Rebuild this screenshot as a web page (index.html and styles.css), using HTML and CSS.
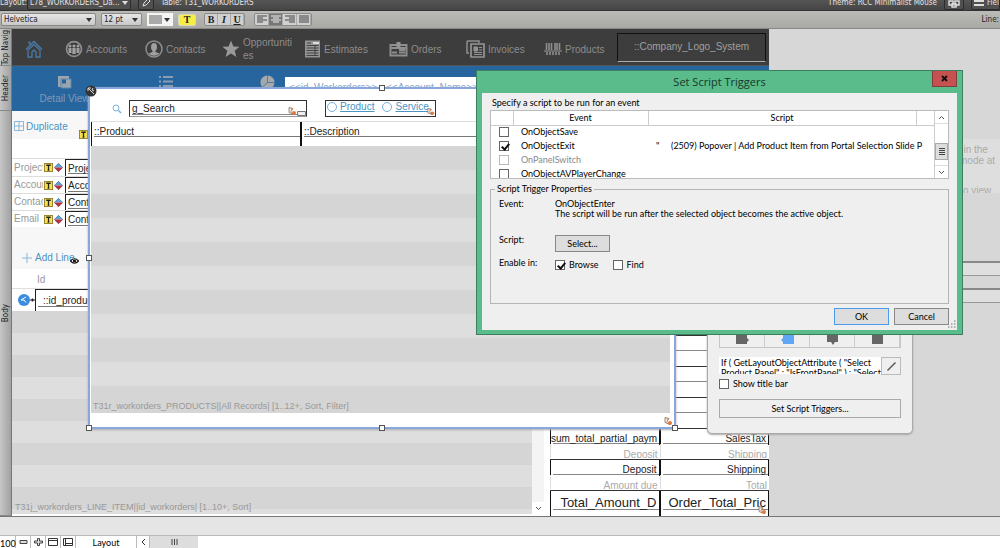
FILE: index.html
```
<!DOCTYPE html>
<html lang="en">
<head>
<meta charset="UTF-8">
<meta name="viewport" content="width=device-width, initial-scale=1.0">
<title>Workorders - Layout</title>
<link rel="stylesheet" href="styles.css">
</head>
<body>

<svg class="defs" aria-hidden="true">
<symbol id="tip" viewBox="0 0 10 10"><rect x=".5" y=".5" width="9" height="9" fill="#f7e04a" stroke="#8f7c2a"/><path d="M2.5 2.5h5M5 2.5v5.5M4 8h2" stroke="#222" stroke-width="1.4" fill="none"/></symbol>
<symbol id="diamond" viewBox="0 0 10 10"><path d="M5 0l5 5H0z" fill="#58a4d8"/><path d="M0 5h10L5 10z" fill="#c0303a"/><path d="M5 .5L9.500 5 5 9.500.5 5z" fill="none" stroke="#4a5578" stroke-width=".5"/></symbol>
<symbol id="trigger" viewBox="0 0 10 10"><path d="M2 1.5l4 1-2 3 3 3-5-2z" fill="#eee" stroke="#8a6a55" stroke-width=".8"/><circle cx="7" cy="7" r="2" fill="#e07a3c"/><circle cx="5" cy="3" r="1" fill="#d98a5a"/></symbol>
<symbol id="eye" viewBox="0 0 10 8"><path d="M.5 4Q5-1 9.500 4Q5 9 .5 4z" fill="#fff" stroke="#111" stroke-width="1.300"/><circle cx="5" cy="4" r="1.800" fill="#111"/></symbol>
</svg>

<!-- Layout bar -->
<div class="topbar">
<span>Layout:</span>
<button class="dark-btn layout-name">L78_WORKORDERS_Da...<i class="caret light"></i></button>
<button class="dark-btn pencil" aria-label="Edit layout"><svg width="10" height="10" viewBox="0 0 10 10"><path d="M2 8l1-3 4-4 2 2-4 4z" fill="none" stroke="#ddd"/></svg></button>
<span>Table: T31_WORKORDERS</span>
<span class="theme">Theme: RCC Minimalist Mouse</span>
<button class="dark-btn" aria-label="Change theme"><svg width="14" height="10" viewBox="0 0 14 10"><path d="M2 3h4v4H2zM8 3h4v4H8zM5 6h4v3H5z" fill="none" stroke="#ddd" stroke-width="1.500"/></svg></button>
<button class="dark-btn fields"><svg width="10" height="8" viewBox="0 0 10 8"><path d="M0 2h10M0 6h10" stroke="#ddd" stroke-width="2"/></svg> Field</button>
</div>

<!-- Formatting bar -->
<div class="toolbar">
<button class="tool-select font">Helvetica<i class="caret"></i></button>
<button class="tool-select size">12 pt<i class="caret"></i></button>
<button class="swatch" aria-label="Text color"><b></b><i class="caret"></i></button>
<button class="highlight">T</button>
<div class="group style"><button>B</button><button class="ital">I</button><button class="under">U</button></div>
<div class="group align">
<button aria-label="Left"><svg width="10" height="9" viewBox="0 0 10 9"><path d="M0 1h10M0 3h6M0 5h10M0 7h6" stroke="#444"/></svg></button>
<button class="on" aria-label="Center"><svg width="10" height="9" viewBox="0 0 10 9"><path d="M0 1h10M2 3h6M0 5h10M2 7h6" stroke="#eee"/></svg></button>
<button aria-label="Right"><svg width="10" height="9" viewBox="0 0 10 9"><path d="M0 1h10M4 3h6M0 5h10M4 7h6" stroke="#444"/></svg></button>
<button aria-label="Justify"><svg width="10" height="9" viewBox="0 0 10 9"><path d="M0 1h10M0 3h10M0 5h10M0 7h10" stroke="#444"/></svg></button>
</div>
<span class="line-label">Line:</span>
</div>

<div class="workspace">
<div class="parts">
<div class="part nav-part"><span>Top Navig</span></div>
<div class="part header-part"><span>Header</span></div>
<div class="part body-part"><span>Body</span></div>
</div>

<div class="canvas">
<nav class="nav">
<a href="#" aria-label="Home"><svg width="18" height="18" viewBox="0 0 18 18"><path d="M1 9.500L9 1.500l8 8M3 2.500h2v3M3 10v7h4v-5l2-2 2 2v5h4v-7L9 4.500z" fill="none" stroke="#477ba6" stroke-width="1.300"/></svg></a>
<a href="#"><svg width="18" height="18" viewBox="0 0 18 18"><circle cx="9" cy="9" r="8.300" fill="#8e8e8e"/><circle cx="9" cy="9" r="6.600" fill="#3d3d3d"/><g fill="#a0a0a0"><circle cx="5" cy="6" r="1.500"/><circle cx="9" cy="6" r="1.600"/><circle cx="13" cy="6" r="1.500"/><path d="M3.500 8h3v5h-3zM7.300 8h3.400v6H7.300zM11.500 8h3v5h-3z"/></g></svg><span>Accounts</span></a>
<a href="#"><svg width="18" height="18" viewBox="0 0 18 18"><circle cx="9" cy="9" r="8" fill="none" stroke="#8e8e8e" stroke-width="1.500"/><ellipse cx="9" cy="7" rx="3" ry="4" fill="#a0a0a0"/><path d="M7.500 10h3v2l4 1.500Q9 18 3.500 13.500l4-1.500z" fill="#a0a0a0"/></svg><span>Contacts</span></a>
<a href="#"><svg width="18" height="18" viewBox="0 0 18 18"><path d="M9 .5l2.400 6 6.100.3-4.800 4 1.700 6.200L9 13.500 3.600 17l1.700-6.200-4.800-4 6.100-.3z" fill="#9a9a9a"/></svg><span>Opportuniti<br>es</span></a>
<a href="#"><svg width="17" height="18" viewBox="0 0 17 18"><rect x="1" y=".5" width="15" height="17" fill="#949494"/><path d="M3 3h4M2.500 5.500h12M2.500 8h12M2.500 10.500h12M2.500 13h12M2.500 15.500h12M11 6v10" stroke="#3d3d3d" stroke-width=".9"/><path d="M9 2h6v2H9z" fill="#ddd"/></svg><span>Estimates</span></a>
<a href="#"><svg width="19" height="18" viewBox="0 0 19 18"><path d="M1.500 5h16v10.500h-16zM1.500 8h16M3 12.500h5M10 10h6M10 12.500h6" fill="none" stroke="#8e8e8e" stroke-width="2"/><path d="M7.500 2h4v6h-4z" fill="#949494"/></svg><span>Orders</span></a>
<a href="#"><svg width="19" height="18" viewBox="0 0 19 18"><path d="M1 1h12v2M1 1v12h2" fill="none" stroke="#8e8e8e" stroke-width="1.500"/><path d="M5 4h13v13H5z" fill="none" stroke="#949494" stroke-width="1.700"/><path d="M8 7h3.500v4H8zM13 7.500h3M13 10h3M8 12.500h8M8 14.500h8" fill="#949494" stroke="#949494"/></svg><span>Invoices</span></a>
<a href="#"><svg width="18" height="18" viewBox="0 0 18 18"><path d="M2.500 3v7M5 3v7M7.500 3v7M11 3v7M13 3v7M15.500 3v7M3 12v3M6 12v3M9 12v3M12 12v3M15 12v3" stroke="#8e8e8e" stroke-width="1.600"/><path d="M0 11h18" stroke="#999"/></svg><span>Products</span></a>
<div class="logo">::Company_Logo_System</div>
</nav>

<header class="header">
<a href="#" class="detail"><svg width="15" height="14" viewBox="0 0 15 14"><path d="M1 1h11v11H1z" fill="#9aa5ae"/><path d="M4 4h10v9H4z" fill="#9aa5ae" stroke="#5c88ad"/><path d="M5 4.500h4v4H5z" fill="#27659f"/></svg><span>Detail View</span></a>
<a href="#" aria-label="List View"><svg width="14" height="14" viewBox="0 0 14 14"><path d="M0 2h2M0 6.500h2M0 11h2M4 2h10M4 6.500h10M4 11h10" stroke="#8b9daf" stroke-width="1.800"/></svg></a>
<a href="#" aria-label="Report"><svg width="15" height="15" viewBox="0 0 15 15"><circle cx="7.500" cy="7.500" r="7" fill="#a3a9ad"/><path d="M7.500 0v7.500L2.500 12M7.500 7.500H15" fill="none" stroke="#47708f" stroke-width=".8"/></svg></a>
<div class="title-field">&lt;&lt;id_Workorders&gt;&gt; - &lt;&lt;Account_Name&gt;&gt; /</div>
</header>

<div class="record">
<div class="left-col">
<div class="duplicate"><a href="#"><svg width="10" height="10" viewBox="0 0 10 10"><path d="M.5.5h9v9h-9zM5 0v10M0 5h10" fill="none" stroke="#7fb0d4" stroke-width=".9"/></svg>Duplicate</a><svg class="tip-end" width="9" height="9"><use href="#tip"/></svg></div>
<div class="details">
<div class="row"><label for="f1">Project</label><svg width="9" height="9"><use href="#tip"/></svg><svg width="9" height="9"><use href="#diamond"/></svg><input id="f1" value="Project_Name"></div>
<div class="row"><label for="f2">Account</label><svg width="9" height="9"><use href="#tip"/></svg><svg width="9" height="9"><use href="#diamond"/></svg><input id="f2" value="Account_Name"></div>
<div class="row"><label for="f3">Contact</label><svg width="9" height="9"><use href="#tip"/></svg><svg width="9" height="9"><use href="#diamond"/></svg><input id="f3" value="Contact_Name"></div>
<div class="row"><label for="f4">Email</label><svg width="9" height="9"><use href="#tip"/></svg><svg width="9" height="9"><use href="#diamond"/></svg><input id="f4" value="Contact_Email"></div>
</div>
<div class="add-line"><a href="#"><svg width="10" height="10" viewBox="0 0 10 10"><path d="M5 0v10M0 5h10" stroke="#8ab6d8"/></svg>Add Line</a><svg class="eye" width="9" height="8"><use href="#eye"/></svg></div>
<div class="id-head">Id</div>
<div class="line-item"><svg width="12" height="12" viewBox="0 0 12 12"><circle cx="6" cy="6" r="6" fill="#3c8ce0"/><path d="M3 6l5-3M3 6h3l2 2.500" stroke="#fff" fill="none"/></svg><svg width="5" height="6"><use href="#eye"/></svg><input aria-label="Product id" value="::id_product"></div>
<div class="stripes"><span>T31j_workorders_LINE_ITEM||id_workorders| [1..10+, Sort]</span></div>
</div>
<div class="line-scroll"><button aria-label="Scroll down"><svg width="7" height="5" viewBox="0 0 7 5"><path d="M1 1l2.500 2.500L6 1" fill="none" stroke="#555"/></svg></button></div>

<div class="totals">
<div class="pair"><b></b><b>Subtotal:</b></div>
<div class="pair small"><i></i><i></i></div>
<div class="pair"><b></b><b></b></div>
<div class="pair small"><i></i><i></i></div>
<div class="pair"><b></b><b></b></div>
<div class="pair small"><i></i><i></i></div>
<div class="pair"><b>sum_total_partial_paym</b><b>SalesTax</b></div>
<div class="pair small"><i>Deposit</i><i>Shipping</i></div>
<div class="pair"><b>Deposit</b><b>Shipping</b></div>
<div class="pair small"><i>Amount due</i><i>Total</i></div>
<div class="pair big"><b>Total_Amount_D</b><b>Order_Total_Pric</b><svg class="trig" width="10" height="10"><use href="#trigger"/></svg></div>
</div>
</div>
</div>

<div class="outside">
<div class="ghost note">Click in the<br>mode at</div>
<div class="ghost tail">how to view</div>
<div class="ghost-bar first"></div>
<div class="ghost-bar"></div>
</div>
</div>

<div class="gutter"></div>
<footer class="status">
<span class="zoom">100</span>
<button aria-label="Zoom out"><svg width="9" height="8" viewBox="0 0 9 8"><path d="M1 2.500h7v3H1z" fill="#ddd" stroke="#444"/></svg></button>
<button aria-label="Zoom in"><svg width="9" height="8" viewBox="0 0 9 8"><path d="M3.500.5h2v2.500h3v2h-3v2.500h-2V5h-3V3h3z" fill="#ddd" stroke="#444"/></svg></button>
<button aria-label="Status toolbar"><svg width="10" height="8" viewBox="0 0 10 8"><path d="M.5.5h9v7h-9zM.5 2.500h9" fill="none" stroke="#333"/></svg></button>
<button aria-label="Part labels"><svg width="10" height="8" viewBox="0 0 10 8"><path d="M.5.5h9v7h-9zM2.500.5v7M2.500 5.500h7" fill="none" stroke="#333"/></svg></button>
<button class="mode">Layout</button>
<button class="arrow" aria-label="Scroll left"><svg width="5" height="8" viewBox="0 0 5 8"><path d="M4 1L1 4l3 3" fill="none" stroke="#333"/></svg></button>
<div class="thumb"><svg width="7" height="6" viewBox="0 0 7 6"><path d="M1 0v6M3.500 0v6M6 0v6" stroke="#444"/></svg></div>
</footer>

<!-- Popover placed on the layout -->
<section class="popover">
<span class="handle n"></span><span class="handle w"></span><span class="handle sw"></span><span class="handle s"></span><span class="handle se"></span>
<svg class="anchor" width="12" height="12" viewBox="0 0 12 12"><circle cx="6" cy="6" r="5.500" fill="#333"/><path d="M3 3l6 6M3 6V3h3M8 3l-1 2 2 1" stroke="#ddd" fill="none"/></svg>
<div class="filters">
<svg width="10" height="10" viewBox="0 0 10 10"><circle cx="4" cy="4" r="3" fill="none" stroke="#79aeda"/><path d="M6.500 6.500L9 9" stroke="#79aeda" stroke-width="1.400"/></svg>
<div class="search"><input aria-label="Search" value="g_Search"><svg width="10" height="10"><use href="#trigger"/></svg><svg width="9" height="5" viewBox="0 0 9 5"><path d="M.5.5h8v4h-8z" fill="#eee" stroke="#777"/></svg></div>
<div class="kind"><label><input type="radio" name="kind">Product</label><label><input type="radio" name="kind">Service</label><svg width="9" height="9"><use href="#trigger"/></svg></div>
</div>
<div class="cols"><span>::Product</span><span>::Description</span></div>
<div class="portal">
<div></div><div></div><div></div><div></div><div></div><div></div><div></div><div></div><div></div><div></div><div>T31r_workorders_PRODUCTS||All Records| [1..12+, Sort, Filter]</div>
</div>
<svg class="corner" width="10" height="10"><use href="#trigger"/></svg>
</section>

<!-- Popover setup -->
<aside class="setup">
<div class="sides">
<button aria-label="Left"><svg width="13" height="11" viewBox="0 0 13 11"><path d="M0 0h11v4l2 2-2 2v2H0z" fill="#666"/></svg></button>
<button aria-label="Right"><svg width="13" height="11" viewBox="0 0 13 11"><path d="M13 0H2v4L0 6l2 2v2h11z" fill="#5fa6f5"/></svg></button>
<button aria-label="Top"><svg width="13" height="11" viewBox="0 0 13 11"><path d="M1 0h11v8H9l-2 3-2-3H1z" fill="#666"/></svg></button>
<button aria-label="Bottom"><svg width="13" height="11" viewBox="0 0 13 11"><path d="M1 0h11v10H1z" fill="#666"/></svg></button>
</div>
<div class="calc"><div class="calc-text">If ( GetLayoutObjectAttribute ( "Select<br>Product Panel" ; "IsFrontPanel" ) ; "Select</div><button aria-label="Edit title"><svg width="11" height="11" viewBox="0 0 11 11"><path d="M1.500 9.500l8-8" stroke="#555" stroke-width="1.500"/></svg></button></div>
<label class="tick"><input type="checkbox">Show title bar</label>
<button class="triggers">Set Script Triggers...</button>
</aside>

<!-- Script triggers dialog -->
<div class="dialog" role="dialog" aria-labelledby="dlg-title">
<div class="dlg-bar"><h1 id="dlg-title">Set Script Triggers</h1><button class="close" aria-label="Close"><svg width="7" height="7" viewBox="0 0 7 7"><path d="M1 1l5 5M6 1L1 6" stroke="#111" stroke-width="1.800"/></svg></button></div>
<div class="dlg-body">
<p>Specify a script to be run for an event</p>
<div class="events">
<table>
<thead><tr><th class="c1"></th><th class="c2">Event</th><th>Script</th><th class="c4"></th></tr></thead>
<tbody>
<tr><td><input type="checkbox" aria-label="OnObjectSave"></td><td>OnObjectSave</td><td></td><td></td></tr>
<tr><td><input type="checkbox" aria-label="OnObjectExit" checked></td><td>OnObjectExit</td><td><span class="mark">"</span>(2509) Popover | Add Product Item from Portal Selection Slide P</td><td></td></tr>
<tr class="off"><td><input type="checkbox" aria-label="OnPanelSwitch" disabled></td><td>OnPanelSwitch</td><td></td><td></td></tr>
<tr><td><input type="checkbox" aria-label="OnObjectAVPlayerChange"></td><td>OnObjectAVPlayerChange</td><td></td><td></td></tr>
</tbody>
</table>
<div class="scroll">
<button aria-label="Up"><svg width="7" height="5" viewBox="0 0 7 5"><path d="M1 4l2.500-2.500L6 4" fill="none" stroke="#555"/></svg></button>
<div class="grip"><svg width="6" height="7" viewBox="0 0 6 7"><path d="M0 .5h6M0 2.500h6M0 4.500h6M0 6.500h6" stroke="#444"/></svg></div>
<button aria-label="Down"><svg width="7" height="5" viewBox="0 0 7 5"><path d="M1 1l2.500 2.500L6 1" fill="none" stroke="#555"/></svg></button>
</div>
</div>
<fieldset>
<legend>Script Trigger Properties</legend>
<div class="props">
<span>Event:</span><div class="about">OnObjectEnter<br>The script will be run after the selected object becomes the active object.</div>
<span>Script:</span><div><button class="win-btn">Select...</button></div>
<span>Enable in:</span><div class="modes"><label class="tick"><input type="checkbox" checked>Browse</label><label class="tick"><input type="checkbox">Find</label></div>
</div>
</fieldset>
<div class="actions"><button class="win-btn ok">OK</button><button class="win-btn">Cancel</button></div>
<svg class="resize" width="9" height="9" viewBox="0 0 9 9"><path d="M7 1h1.500M4 4h1.500M7 4h1.500M1 7h1.500M4 7h1.500M7 7h1.500" stroke="#999" stroke-width="1.500"/></svg>
</div>
</div>

</body>
</html>
```
FILE: styles.css
```
* { box-sizing: border-box; }

body {
margin: 0;
min-height: 100vh;
display: flex;
flex-direction: column;
position: relative;
overflow: hidden;
background: #fff;
font-family: "Liberation Sans", Arial, sans-serif;
font-size: 10px;
line-height: 12px;
color: #222;
}

button, input {
font: inherit;
color: inherit;
margin: 0;
padding: 0;
border: 0;
background: none;
border-radius: 0;
}

a { color: inherit; text-decoration: none; }
svg { display: block; flex: none; }
.defs { position: absolute; width: 0; height: 0; }

.caret {
border: 3px solid transparent;
border-top: 4px solid #333;
border-bottom: 0;
}
.caret.light { border-top-color: #ddd; }

/* Layout bar */
.topbar {
height: 11px;
overflow: hidden;
display: flex;
align-items: flex-end;
gap: 7px;
background: linear-gradient(#555, #454545);
border-bottom: 1px solid #333;
color: #e2e2e2;
font-family: "DejaVu Sans Condensed", "DejaVu Sans", sans-serif;
font-size: 8px;
white-space: nowrap;
}
.topbar span { line-height: 14px; }
.topbar span:first-child { margin-right: -7px; }
.dark-btn {
height: 14px;
flex: none;
display: flex;
align-items: center;
gap: 3px;
padding: 0 2px;
border: 1px solid #2c2c2c;
border-radius: 2px;
background: #505050;
}
.layout-name { width: 104px; justify-content: space-between; overflow: hidden; }
.theme { margin-left: auto; }
.fields { width: 29px; overflow: hidden; }

/* Formatting bar */
.toolbar {
height: 18px;
display: flex;
align-items: center;
gap: 5px;
padding: 0 1px;
background: linear-gradient(#bbbbb8, #a9a9a6);
border-bottom: 1px solid #888;
font-family: "DejaVu Sans Condensed", "DejaVu Sans", sans-serif;
font-size: 8px;
}
.tool-select {
height: 13px;
display: flex;
align-items: center;
justify-content: space-between;
padding: 0 3px 0 2px;
background: linear-gradient(#e6e6e6, #c9c9c9);
border: 1px solid #888;
border-radius: 2px;
}
.font { width: 95px; }
.size { width: 41px; }
.swatch { width: 26px; height: 13px; background: #f4f4f4; display: flex; align-items: center; gap: 2px; padding: 0 2px; }
.swatch b { width: 13px; height: 9px; background: #aaa; }
.highlight { width: 18px; height: 12px; background: #f6ee45; border: 1px solid #d8d8c0; border-radius: 2px; font: bold 10px/10px "Liberation Serif", serif; }
.group { display: flex; border: 1px solid #8a8a8a; border-radius: 2px; background: #d0d0d0; }
.group button { height: 11px; display: flex; align-items: center; justify-content: center; border-right: 1px solid #aaa; }
.group.style { margin-left: 3px; font: bold 10px/11px "Liberation Serif", serif; }
.group.style button { width: 13px; }
.group.align { margin-left: 4px; }
.group.align button { width: 14px; }
.group .on { background: #777; }
.group .ital { font-style: italic; }
.group .under { text-decoration: underline; }
.line-label { margin-left: auto; }

/* Workspace */
.workspace {
flex: 1;
display: grid;
grid-template-columns: 12px 757fr 231fr;
border-bottom: 1px solid #777;
}
.parts { display: flex; flex-direction: column; font-family: "DejaVu Sans Condensed", "DejaVu Sans", sans-serif; font-size: 8px; }
.part {
display: flex;
align-items: center;
justify-content: center;
overflow: hidden;
background: linear-gradient(90deg, #c6c6c6, #a2a2a2);
border-right: 1px solid #777;
border-bottom: 1px solid #888;
}
.part span { writing-mode: vertical-rl; transform: rotate(180deg); white-space: nowrap; }
.nav-part { height: 37px; }
.header-part { height: 45px; }
.body-part { flex: 1; }

.canvas { display: flex; flex-direction: column; min-width: 0; background: #fff; }

.nav {
height: 37px;
display: grid;
grid-template-columns: 40fr 80fr 77fr 82fr 85fr 77fr 78fr 73fr 149fr;
align-items: center;
padding: 0 3px 0 13px;
background: #3d3d3d;
border-bottom: 1px solid #555;
color: #8c8c8c;
}
.nav a { display: flex; align-items: center; gap: 3px; padding-top: 4px; }
.nav span { line-height: 13px; }
.logo { height: 29px; display: flex; align-items: center; justify-content: center; border: 1px solid #111; border-bottom-color: #aaa; color: #a0a0a0; }

.header {
height: 45px;
display: grid;
grid-template-columns: 105fr 97fr 107fr 448fr;
padding-top: 9px;
background: #27659f;
color: #7f9bb5;
}
.header a { display: flex; flex-direction: column; align-items: center; gap: 4px; }
.title-field { margin-top: 2px; margin-left: -36px; padding: 5px 0 0 4px; background: #fff; color: #8da6cc; white-space: nowrap; }

.record { flex: 1; display: flex; min-height: 0; }
.left-col { flex: 1; display: flex; flex-direction: column; min-width: 0; }
.duplicate { height: 28px; display: flex; padding: 10px 0 0 2px; background: #f7f7f7; color: #4b93c5; }
.duplicate a { display: flex; gap: 2px; width: 65px; }
.tip-end { margin-top: 9px; }
.details { padding-top: 19px; }
.row { display: flex; align-items: center; gap: 1px; height: 18px; padding-left: 2px; border-top: 1px solid #ddd; color: #999; }
.details .row + .row { height: 17px; }
.row label { width: 29px; overflow: hidden; }
.row input, .line-item input {
width: 90px;
height: 100%;
margin-left: 1px;
padding-left: 2px;
border-left: 1px solid #222;
border-top: 1px solid #222;
color: #222;
background: linear-gradient(#777, #777) 2px 13px / 100% 1px no-repeat;
}
.add-line { height: 42px; display: flex; align-items: flex-end; padding: 0 0 4px 10px; background: #f7f7f7; color: #4b93c5; }
.add-line a { display: flex; align-items: center; gap: 3px; height: 14px; }
.eye { margin-left: -4px; }
.id-head { height: 19px; padding: 5px 0 0 25px; color: #999; }
.line-item { height: 23px; display: flex; align-items: center; padding-left: 6px; border-top: 1px solid #ddd; }
.line-item input { margin-left: 0; padding-left: 7px; background-position: 2px 16px; }
.stripes {
flex: 1;
display: flex;
align-items: flex-end;
padding: 0 0 1px 3px;
margin-bottom: 2px;
background: repeating-linear-gradient(#d5d5d5 0 22px, #dedede 22px 44px);
font-size: 9px;
color: #999;
}
.line-scroll { width: 12px; display: flex; align-items: flex-end; background: #f4f4f4; margin: 0 6px 2px 0; }
.line-scroll button { width: 12px; height: 12px; display: flex; align-items: center; justify-content: center; background: #fff; }

.totals { width: 219px; display: flex; flex-direction: column; justify-content: flex-end; }
.pair { position: relative; display: grid; grid-template-columns: 1fr 1fr; height: 16px; border-top: 1px solid #333; }
.pair b, .pair i { font-weight: normal; font-style: normal; text-align: right; overflow: hidden; padding-right: 2px; white-space: nowrap; }
.pair b { height: 16px; border-left: 1px solid #111; border-right: 1px solid #111; padding-top: 4px; background: linear-gradient(#888, #888) 2px 14px / 100% 1px no-repeat; }
.pair.small { height: 15px; border-top: 0; }
.pair.small i { height: 14px; padding-top: 5px; color: #aaa; border-left: 1px solid #ddd; }
.pair.big { height: 26px; font-size: 13px; line-height: 16px; }
.pair.big b { height: 25px; padding-top: 4px; background-position: 2px 18px; }
.trig { position: absolute; right: 2px; bottom: 1px; }

.outside { background: #d7d7d7; overflow: hidden; color: #aaa; line-height: 11px; }
.ghost { margin-left: 190px; background: #dedede; white-space: nowrap; text-indent: -20px; }
.note { margin-top: 110px; padding-top: 5px; height: 46px; }
.tail { height: 8px; overflow: hidden; }
.ghost-bar { margin-top: 12px; height: 15px; background: #dfdfdf; border-top: 2px solid #888; border-bottom: 1px solid #999; }
.ghost-bar.first { margin-top: 68px; }

.gutter { height: 19px; background: #e5e5e5; border-bottom: 1px solid #bbb; }
.status { height: 12px; display: flex; font-family: Lato, "Open Sans", sans-serif; font-size: 9px; line-height: 15px; color: #000; }
.status button { width: 15px; display: flex; align-items: center; justify-content: center; border-right: 1px solid #bbb; }
.zoom { width: 16px; border-right: 1px solid #bbb; }
.status .mode { width: 61px; }
.status .arrow { width: 13px; }
.thumb { width: 48px; background: #ddd; display: flex; align-items: center; justify-content: center; }

/* Popover */
.popover {
position: absolute;
left: 88px;
top: 87px;
width: 588px;
padding: 0 4px 14px 1px;
background: #fff;
border: 2px solid #8aa7dc;
box-shadow: 0 1px 2px #aaa;
}
.handle { position: absolute; width: 6px; height: 6px; border: 1px solid #555; background: #fff; }
.handle.n { left: calc(50% - 3px); top: -4px; }
.handle.w { left: -4px; top: calc(50% - 3px); }
.handle.sw { left: -4px; bottom: -4px; }
.handle.s { left: calc(50% - 3px); bottom: -4px; }
.handle.se { right: -4px; bottom: -4px; }
.anchor { position: absolute; left: -5px; top: -4px; }
.corner { position: absolute; right: 1px; bottom: 1px; }
.filters { height: 32px; display: flex; align-items: center; padding: 7px 0 0 21px; }
.search { width: 178px; height: 17px; display: flex; align-items: flex-end; margin-left: 7px; padding-left: 2px; border: 1px solid #333; border-bottom-color: #999; background: linear-gradient(#888, #888) 2px 13px / 100% 1px no-repeat; }
.search input { flex: 1; min-width: 0; height: 15px; }
.kind { position: relative; display: flex; align-items: flex-start; gap: 8px; width: 111px; height: 17px; margin-left: 18px; padding-left: 1px; border: 1px solid #333; color: #4b93c5; text-decoration: underline; }
.kind label { display: flex; align-items: center; gap: 3px; }
.kind input { appearance: none; width: 10px; height: 10px; border: 1px solid #79aeda; border-radius: 50%; }
.kind svg { position: absolute; right: 0; bottom: 0; }
.cols { display: grid; grid-template-columns: 209fr 370fr; height: 25px; border-top: 1px solid #ddd; }
.cols span { height: 24px; padding: 4px 0 0 2px; border-left: 1px solid #111; background: linear-gradient(#777, #777) 2px 14px / 100% 1px no-repeat; }
.cols span + span { border-left-width: 2px; }
.portal { display: flex; flex-direction: column; font-size: 9px; }
.portal div { height: 24px; display: flex; align-items: flex-end; padding: 0 0 1px 2px; color: #999; }
.portal div:nth-child(odd) { background: #d5d5d5; }
.portal div:nth-child(even) { background: #dedede; }
.portal div:last-child { height: 27px; }

/* Windows controls */
.dialog, .setup { font-family: Lato, "Open Sans", sans-serif; font-size: 9px; line-height: 10px; color: #000; }
input[type="checkbox"] { appearance: none; display: block; flex: none; width: 10px; height: 10px; border: 1px solid #666; background: #fff; }
input[type="checkbox"]:checked::after { content: ""; display: block; width: 3px; height: 6px; margin-left: 3px; border: solid #111; border-width: 0 2px 2px 0; transform: rotate(40deg); }
input[type="checkbox"]:disabled { border-color: #bbb; }
.tick { display: flex; align-items: center; gap: 4px; }

/* Popover setup */
.setup {
position: absolute;
left: 707px;
top: 320px;
width: 206px;
padding: 0 11px 15px;
background: #efefef;
border: 1px solid #aaa;
border-radius: 5px;
box-shadow: 0 1px 2px #aaa;
}
.sides { display: grid; grid-template-columns: repeat(4, 1fr); border: 1px solid #c6c6c6; }
.sides button { height: 25px; display: flex; justify-content: center; align-items: flex-end; padding-bottom: 2px; border-right: 1px solid #ccc; }
.calc { display: flex; margin-top: 9px; height: 18px; }
.calc-text { flex: 1; height: 17px; padding: 1px 0 0 2px; line-height: 10px; overflow: hidden; white-space: nowrap; background: #fff; }
.calc button { width: 20px; display: flex; align-items: center; justify-content: center; border: 1px solid #bbb; }
.setup .tick { margin-top: 4px; }
.triggers { width: 100%; height: 19px; margin-top: 10px; border: 1px solid #aaa; }

/* Dialog */
.dialog {
position: absolute;
left: 476px;
top: 70px;
width: 487px;
padding: 0 5px 4px;
background: #5abb8b;
border: 1px solid #3c7f60;
}
.dlg-bar { position: relative; height: 22px; display: flex; align-items: center; justify-content: center; }
.dlg-bar h1 { margin: 0; font-family: "Open Sans", sans-serif; font-size: 11px; font-weight: normal; line-height: 14px; color: #16382a; }
.close { position: absolute; right: 0; top: 0; width: 25px; height: 16px; display: flex; align-items: center; justify-content: center; background: #c75050; border: 1px solid #7c3f3a; border-top: 0; }
.dlg-body { position: relative; padding: 5px 8px; background: #efefef; }
.dlg-body p { margin: 0 0 2px 2px; line-height: 10px; }
.events { display: flex; height: 69px; background: #fff; border: 1px solid #bbb; overflow: hidden; }
table { flex: 1; width: 100%; border-collapse: collapse; table-layout: fixed; }
th, td { height: 14px; padding: 0; font-weight: normal; white-space: nowrap; }
th { border-right: 1px solid #ccc; border-bottom: 1px solid #ccc; }
td { text-align: left; padding-left: 8px; }
.c1 { width: 22px; }
.c2 { width: 135px; }
.c4 { width: 18px; }
th.c4 { border-right: 0; }
.mark { display: inline-block; width: 15px; }
.off { color: #888; }
.scroll { flex: none; width: 14px; display: flex; flex-direction: column; border-left: 1px solid #ccc; }
.scroll button { height: 13px; display: flex; align-items: center; justify-content: center; border-bottom: 1px solid #ddd; }
.scroll button:last-child { border-top: 1px solid #ddd; border-bottom: 0; }
.grip { height: 17px; margin: auto 0 5px; display: flex; align-items: center; justify-content: center; background: #ddd; border: 1px solid #aaa; }
fieldset { margin: 5px 0 0; padding: 0 8px; height: 120px; border: 1px solid #b5b5b5; }
legend { padding: 0 2px; margin-left: -4px; line-height: 10px; }
.props { display: grid; grid-template-columns: 56px 1fr; grid-template-rows: 36px 23px 12px; padding-top: 5px; }
.modes { display: flex; gap: 14px; padding-top: 1px; }
.win-btn { width: 55px; height: 17px; border: 1px solid #888; background: #ddd; }
.actions { display: flex; justify-content: flex-end; gap: 5px; margin-top: 4px; }
.ok { border-color: #4b9be8; }
.resize { position: absolute; right: 1px; bottom: 1px; }
```
